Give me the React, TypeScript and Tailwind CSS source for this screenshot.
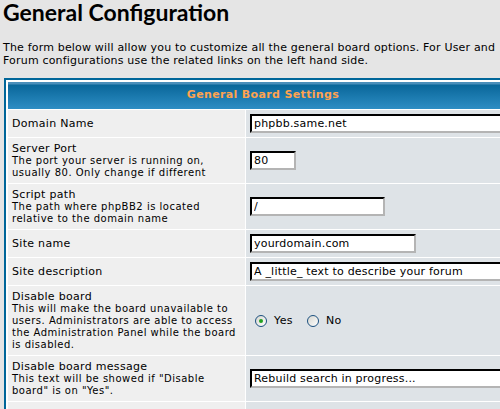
const body = "font-['DejaVu_Sans',Verdana,sans-serif]"

type Row = {
  label: string
  desc?: string[]
  input?: { value: string; width: string }
  radio?: boolean
}

const rows: Row[] = [
  { label: "Domain Name", input: { value: "phpbb.same.net", width: "w-[300px]" } },
  {
    label: "Server Port",
    desc: ["The port your server is running on,", "usually 80. Only change if different"],
    input: { value: "80", width: "w-[46px]" },
  },
  {
    label: "Script path",
    desc: ["The path where phpBB2 is located", "relative to the domain name"],
    input: { value: "/", width: "w-[135px]" },
  },
  { label: "Site name", input: { value: "yourdomain.com", width: "w-[166px]" } },
  {
    label: "Site description",
    input: { value: "A _little_ text to describe your forum", width: "w-[300px]" },
  },
  {
    label: "Disable board",
    desc: [
      "This will make the board unavailable to",
      "users. Administrators are able to access",
      "the Administration Panel while the board",
      "is disabled.",
    ],
    radio: true,
  },
  {
    label: "Disable board message",
    desc: ["This text will be showed if \"Disable", "board\" is on \"Yes\"."],
    input: { value: "Rebuild search in progress...", width: "w-[300px]" },
  },
]

function Radio({ checked, label }: { checked?: boolean; label: string }) {
  return (
    <span className="flex items-center">
      <span className="w-[12px] h-[12px] rounded-full border border-[#1c5180] bg-linear-to-br from-[#d6d6d0] to-white flex items-center justify-center">
        {checked && <span className="w-[4px] h-[4px] rounded-full bg-[#21a121]" />}
      </span>
      <span className="ml-[7px] text-[11px] leading-[14px] tracking-[0.4px]">{label}</span>
    </span>
  )
}

export default function App() {
  return (
    <div className={`w-[500px] h-[409px] overflow-hidden bg-[#e5e5e5] text-black ${body}`}>
      <h1 className="-mt-[2px] pl-[3px] font-['Lato',sans-serif] text-[23px] font-bold leading-[28px]">
        General Configuration
      </h1>
      <p className="mt-[15px] pl-[3px] text-[11px] leading-[13px] tracking-[0.18px] whitespace-nowrap">
        The form below will allow you to customize all the general board options. For User and
        <br />
        Forum configurations use the related links on the left hand side.
      </p>

      <div className="mt-[11px] ml-[4px] w-[518px] border-2 border-[#006699] bg-white p-[2px] grid grid-cols-[237px_minmax(0,1fr)] gap-px">
        <div className="col-span-2 h-[27px] flex items-center justify-center bg-[linear-gradient(to_bottom,#4a8fbb_0px,#4a8fbb_2px,#0a679a_3px,#2d8dc4_100%)] text-[11px] font-bold tracking-[0.35px] text-[#ffa34f]">
          General Board Settings
        </div>

        {rows.map((r) => (
          <>
            <div key={r.label + "l"} className="bg-[#efefef] p-[4px] flex flex-col justify-center">
              <span className="text-[11px] leading-[13px] tracking-[0.3px]">{r.label}</span>
              {r.desc?.map((d) => (
                <span key={d} className="text-[10px] leading-[12px] tracking-[0.5px] whitespace-nowrap">
                  {d}
                </span>
              ))}
            </div>
            <div key={r.label + "v"} className="bg-[#dee3e7] p-[4px] flex items-center overflow-hidden">
              {r.input && (
                <input
                  readOnly
                  value={r.input.value}
                  className={`${r.input.width} shrink-0 h-[19px] bg-white px-[2px] text-[11px] leading-[15px] tracking-[0.2px] outline-none border-2 border-t-black border-l-black border-b-[#b4b4b4] border-r-[#b4b4b4] ${body}`}
                />
              )}
              {r.radio && (
                <div className="flex items-center gap-[14px] ml-[5px]">
                  <Radio checked label="Yes" />
                  <Radio label="No" />
                </div>
              )}
            </div>
          </>
        ))}

        <div className="h-[40px] bg-[#efefef]" />
        <div className="h-[40px] bg-[#dee3e7]" />
      </div>
    </div>
  )
}
